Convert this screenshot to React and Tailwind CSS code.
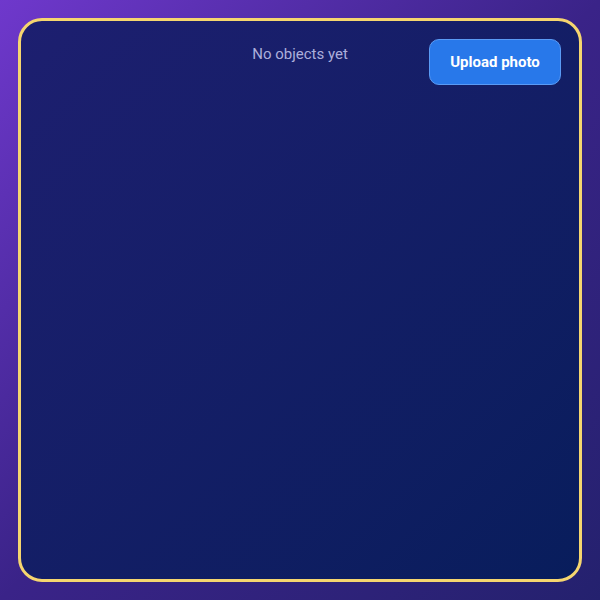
export default function App() {
  return (
    <div className="w-[600px] h-[600px] bg-gradient-to-br from-[#6f38cc] via-[#3a2388] to-[#24216e] p-[18px] font-['Roboto',sans-serif]">
      <div className="relative h-full w-full rounded-[24px] border-[3px] border-[#f6d66f] bg-gradient-to-br from-[#1d1f70] to-[#081d5c] overflow-hidden">
        <p className="pt-[22px] text-center text-[15px] text-[#acaedb]">No objects yet</p>
        <button className="absolute top-[18px] right-[18px] h-[46px] w-[132px] rounded-[10px] border border-[#5a9bf5] bg-[#2878ea] text-[15px] font-bold text-white">
          Upload photo
        </button>
      </div>
    </div>
  );
}
